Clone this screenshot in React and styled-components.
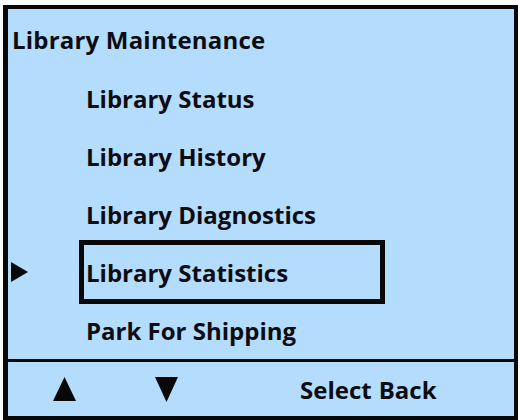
import React from "react";
import styled, { createGlobalStyle } from "styled-components";

const Global = createGlobalStyle`
  html, body { margin: 0; padding: 0; background: #ffffff; }
  body { width: 520px; height: 420px; overflow: hidden; font-family: "Open Sans", Lato, sans-serif; }
`;

const Frame = styled.div`
  box-sizing: border-box;
  margin: 5px 2px 0 3px;
  width: 515px;
  height: 415px;
  background: #b4dcfc;
  border: 4px solid #080808;
  border-left-width: 5px;
  display: flex;
  flex-direction: column;
  color: #0c0c12;
  font-weight: 700;
  font-size: 24px;
`;

const Menu = styled.div`
  flex: 1;
  display: flex;
  flex-direction: column;
`;

const Heading = styled.div`
  height: 60px;
  display: flex;
  align-items: center;
  padding-left: 4px;
  letter-spacing: 0.2px;
`;

const Row = styled.div`
  height: 58px;
  display: flex;
  align-items: center;
`;

const Pointer = styled.div`
  width: 71px;
  display: flex;
  align-items: center;
  padding-left: 3px;
  box-sizing: border-box;
`;

const Item = styled.div`
  box-sizing: border-box;
  display: flex;
  align-items: center;
  padding-left: ${(p) => (p.$selected ? "2px" : "7px")};
  height: ${(p) => (p.$selected ? "64px" : "58px")};
  width: 306px;
  margin: ${(p) => (p.$selected ? "-3px 0" : "0")};
  border: ${(p) => (p.$selected ? "5px solid #080808" : "none")};
`;

const Footer = styled.div`
  box-sizing: border-box;
  height: 57px;
  border-top: 3px solid #080808;
  display: flex;
  align-items: center;
`;

const ArrowBtn = styled.div`
  width: ${(p) => p.$w}px;
  display: flex;
  align-items: center;
  padding-left: ${(p) => p.$pad}px;
  box-sizing: border-box;
`;

const Actions = styled.div`
  display: flex;
  gap: 7px;
`;

const Tri = ({ dir, w, h }) => {
  const pts =
    dir === "up"
      ? `${w / 2},0 ${w},${h} 0,${h}`
      : dir === "down"
      ? `0,0 ${w},0 ${w / 2},${h}`
      : `0,0 ${w},${h / 2} 0,${h}`;
  return (
    <svg width={w} height={h} viewBox={`0 0 ${w} ${h}`}>
      <polygon points={pts} fill="#080808" />
    </svg>
  );
};

const items = [
  "Library Status",
  "Library History",
  "Library Diagnostics",
  "Library Statistics",
  "Park For Shipping",
];
const selected = 3;

export default function App() {
  return (
    <>
      <Global />
      <Frame>
        <Menu>
          <Heading>Library Maintenance</Heading>
          {items.map((t, i) => (
            <Row key={t}>
              <Pointer>{i === selected && <Tri dir="right" w={17} h={20} />}</Pointer>
              <Item $selected={i === selected}>{t}</Item>
            </Row>
          ))}
        </Menu>
        <Footer>
          <ArrowBtn $w={147} $pad={45}>
            <Tri dir="up" w={23} h={24} />
          </ArrowBtn>
          <ArrowBtn $w={145} $pad={0}>
            <Tri dir="down" w={23} h={25} />
          </ArrowBtn>
          <Actions>
            <span>Select</span>
            <span>Back</span>
          </Actions>
        </Footer>
      </Frame>
    </>
  );
}
